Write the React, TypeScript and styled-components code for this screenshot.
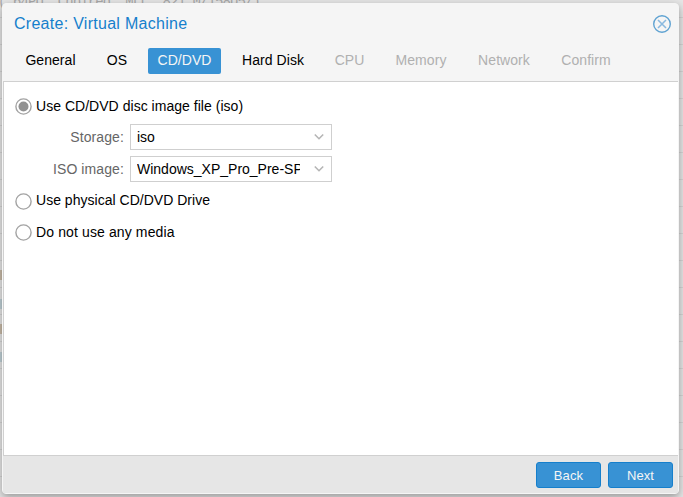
import React, { useState } from "react";
import styled, { createGlobalStyle } from "styled-components";

const GlobalStyle = createGlobalStyle`
  *, *::before, *::after { box-sizing: border-box; }
  body { margin: 0; background: #e2e2e2; overflow: hidden; }
  body, button { font-family: "Liberation Sans", Arial, sans-serif; }
`;

const Desktop = styled.div`
  position: relative;
  width: 683px;
  height: 497px;
  padding: 3px 4px 3px 2px;
  overflow: hidden;
  background: repeating-linear-gradient(to bottom, #e6e6e6 0 17px, #d5d5d5 17px 18px, #e6e6e6 18px 27px);
`;

const LogLine = styled.div`
  position: absolute;
  left: -2px;
  top: -6px;
  font: 14px/16px "Liberation Mono", monospace;
  letter-spacing: -0.92px;
  white-space: pre;
  color: #aaa;
`;

const StatusMark = styled.div<{ $top: number; $color: string }>`
  position: absolute;
  left: 0;
  top: ${(p) => p.$top}px;
  width: 2px;
  height: 10px;
  background: ${(p) => p.$color};
`;

const Window = styled.section`
  position: relative;
  display: flex;
  flex-direction: column;
  height: 491px;
  border: 1px solid #f5f5f5;
  border-radius: 4px;
  background: #f5f5f5;
  box-shadow: 0 3px 9px rgba(0, 0, 0, 0.35);
`;

const Header = styled.header`
  display: flex;
  justify-content: space-between;
  align-items: center;
  height: 40px;
  padding: 0 6px 0 11px;
`;

const Title = styled.h1`
  margin: 0;
  font-size: 16px;
  line-height: 20px;
  font-weight: 400;
  letter-spacing: 0.28px;
  color: #157fcc;
`;

const CloseButton = styled.button`
  display: flex;
  padding: 0;
  border: 0;
  background: none;
`;

const Tabs = styled.nav`
  display: flex;
  gap: 1px;
  height: 37px;
  padding: 4px 0 7px 12px;
`;

const Tab = styled.button<{ $width: number; $state: "active" | "ready" | "disabled" }>`
  width: ${(p) => p.$width}px;
  height: 26px;
  padding: 0 0 2px;
  border: 0;
  border-radius: 2px;
  font-size: 14px;
  line-height: 24px;
  letter-spacing: 0.06px;
  white-space: nowrap;
  background: ${(p) => (p.$state === "active" ? "#3892d4" : "transparent")};
  color: ${(p) => ({ active: "#f5f5f5", ready: "#000", disabled: "#b0b0b0" })[p.$state]};
`;

const Panel = styled.main`
  display: flex;
  flex-direction: column;
  flex: 1;
  padding: 12px 10px;
  border: 1px solid #d0d0d0;
  border-right: 0;
  background: #fff;
`;

const RadioRow = styled.label<{ $gap?: number }>`
  display: flex;
  align-items: center;
  gap: 4px;
  height: 24px;
  margin-bottom: ${(p) => p.$gap ?? 8}px;
  padding-left: 1px;
  font-size: 14px;
  color: #000;
`;

const RadioMark = styled.svg<{ $drop: number }>`
  margin-top: ${(p) => p.$drop}px;
`;

const RadioText = styled.span<{ $spacing: number }>`
  padding-bottom: 1px;
  letter-spacing: ${(p) => p.$spacing}px;
`;

const FieldRow = styled.div`
  display: flex;
  align-items: center;
  height: 26px;
  margin-bottom: 6px;
`;

const FieldLabel = styled.span`
  width: 110px;
  margin-right: 6px;
  text-align: right;
  font-size: 14px;
  letter-spacing: 0.1px;
  color: #666;
`;

const Combo = styled.div`
  display: flex;
  align-items: center;
  width: 202px;
  height: 26px;
  padding: 0 6px;
  border: 1px solid #cfcfcf;
  background: #fff;
`;

const ComboText = styled.span`
  width: 163px;
  margin-right: 14px;
  overflow: hidden;
  white-space: nowrap;
  font-size: 14px;
  line-height: 20px;
  color: #000;
`;

const Footer = styled.footer`
  display: flex;
  justify-content: flex-end;
  gap: 7px;
  height: 37px;
  padding: 6px 5px 0 0;
  background: #e6e6e6;
`;

const ActionButton = styled.button`
  width: 65px;
  height: 26px;
  padding: 0;
  border: 1px solid #157fcc;
  border-radius: 3px;
  font-size: 13px;
  letter-spacing: 0.1px;
  background: #3892d4;
  color: #f5f5f5;
`;

const CloseIcon = () => (
  <svg width="20" height="20" viewBox="0 0 20 20" fill="none">
    <circle cx="10" cy="10" r="8.3" stroke="#60a3d2" strokeWidth="1.4" />
    <path d="M6 6l8 8M14 6l-8 8" stroke="#8ab9df" strokeWidth="1.6" />
  </svg>
);

const RadioIcon = ({ checked, drop }: { checked: boolean; drop: number }) => (
  <RadioMark $drop={drop} width="17" height="17" viewBox="0 0 17 17">
    <circle cx="8.5" cy="8.5" r="7.6" fill="#fff" stroke="#a3a3a3" strokeWidth="1.4" />
    {checked && <circle cx="8.5" cy="8.5" r="5" fill="#919191" />}
  </RadioMark>
);

const ChevronIcon = () => (
  <svg width="10" height="8" viewBox="0 0 10 8" fill="none">
    <path d="M0.8 1.5L5 5.7L9.2 1.5" stroke="#b5b5b5" strokeWidth="1.6" />
  </svg>
);

const tabs = [
  { name: "General", width: 71 },
  { name: "OS", width: 60 },
  { name: "CD/DVD", width: 73 },
  { name: "Hard Disk", width: 102 },
  { name: "CPU", width: 49 },
  { name: "Memory", width: 92 },
  { name: "Network", width: 72 },
  { name: "Confirm", width: 90 },
];

const ComboField = ({ label, value }: { label: string; value: string }) => (
  <FieldRow>
    <FieldLabel>{label}:</FieldLabel>
    <Combo>
      <ComboText>{value}</ComboText>
      <ChevronIcon />
    </Combo>
  </FieldRow>
);

export default function App() {
  const [media, setMedia] = useState("iso");
  return (
    <>
      <GlobalStyle />
      <Desktop>
        <LogLine>( 64PU. Chplred, MLL, 821.0/158U5/)</LogLine>
        <StatusMark $top={270} $color="#c9bba8" />
        <StatusMark $top={324} $color="#c9bba8" />
        <StatusMark $top={299} $color="#bfd0d6" />
        <StatusMark $top={352} $color="#bfd0d6" />
        <Window>
          <Header>
            <Title>Create: Virtual Machine</Title>
            <CloseButton aria-label="Close">
              <CloseIcon />
            </CloseButton>
          </Header>
          <Tabs>
            {tabs.map((tab, i) => (
              <Tab key={tab.name} $width={tab.width} $state={i === 2 ? "active" : i < 4 ? "ready" : "disabled"}>
                {tab.name}
              </Tab>
            ))}
          </Tabs>
          <Panel>
            <RadioRow $gap={6} onClick={() => setMedia("iso")}>
              <RadioIcon checked={media === "iso"} drop={1} />
              <RadioText $spacing={0.03}>Use CD/DVD disc image file (iso)</RadioText>
            </RadioRow>
            <ComboField label="Storage" value="iso" />
            <ComboField label="ISO image" value="Windows_XP_Pro_Pre-SP3.iso" />
            <RadioRow onClick={() => setMedia("physical")}>
              <RadioIcon checked={media === "physical"} drop={2} />
              <RadioText $spacing={0.02}>Use physical CD/DVD Drive</RadioText>
            </RadioRow>
            <RadioRow onClick={() => setMedia("none")}>
              <RadioIcon checked={media === "none"} drop={1} />
              <RadioText $spacing={0.12}>Do not use any media</RadioText>
            </RadioRow>
          </Panel>
          <Footer>
            <ActionButton>Back</ActionButton>
            <ActionButton>Next</ActionButton>
          </Footer>
        </Window>
      </Desktop>
    </>
  );
}
